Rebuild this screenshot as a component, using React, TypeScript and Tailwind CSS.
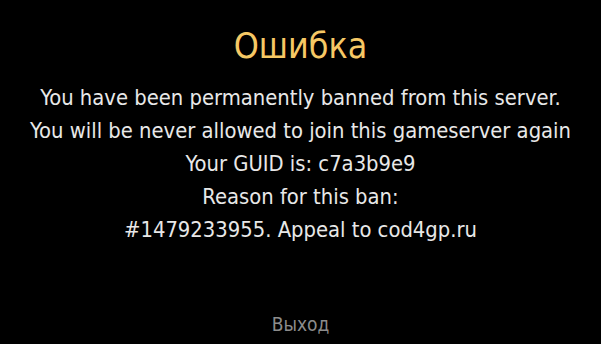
const lines = [
  "You have been permanently banned from this server.",
  "You will be never allowed to join this gameserver again",
  "Your GUID is: c7a3b9e9",
  "Reason for this ban:",
  "#1479233955. Appeal to cod4gp.ru",
];

const App = () => {
  return (
    <div
      className="w-[601px] h-[344px] bg-black flex flex-col items-center overflow-hidden"
      style={{ fontFamily: "'DejaVu Sans Condensed', 'DejaVu Sans', sans-serif", fontStretch: "condensed" }}
    >
      {/* Title */}
      <h1 className="mt-[23px] text-[35.5px] leading-[46px] text-[#f6c865]">Ошибка</h1>

      {/* Message */}
      <div className="mt-[12px] flex flex-col items-center text-[21.8px] leading-[33px] text-[#e8e8e8]">
        {lines.map((line, idx) => (
          <p key={idx} className="whitespace-nowrap">
            {line}
          </p>
        ))}
      </div>

      {/* Footer */}
      <button className="mt-auto mb-[8px] text-[19px] leading-[24px] text-[#8c8c8c]">Выход</button>
    </div>
  );
};

export default App;
